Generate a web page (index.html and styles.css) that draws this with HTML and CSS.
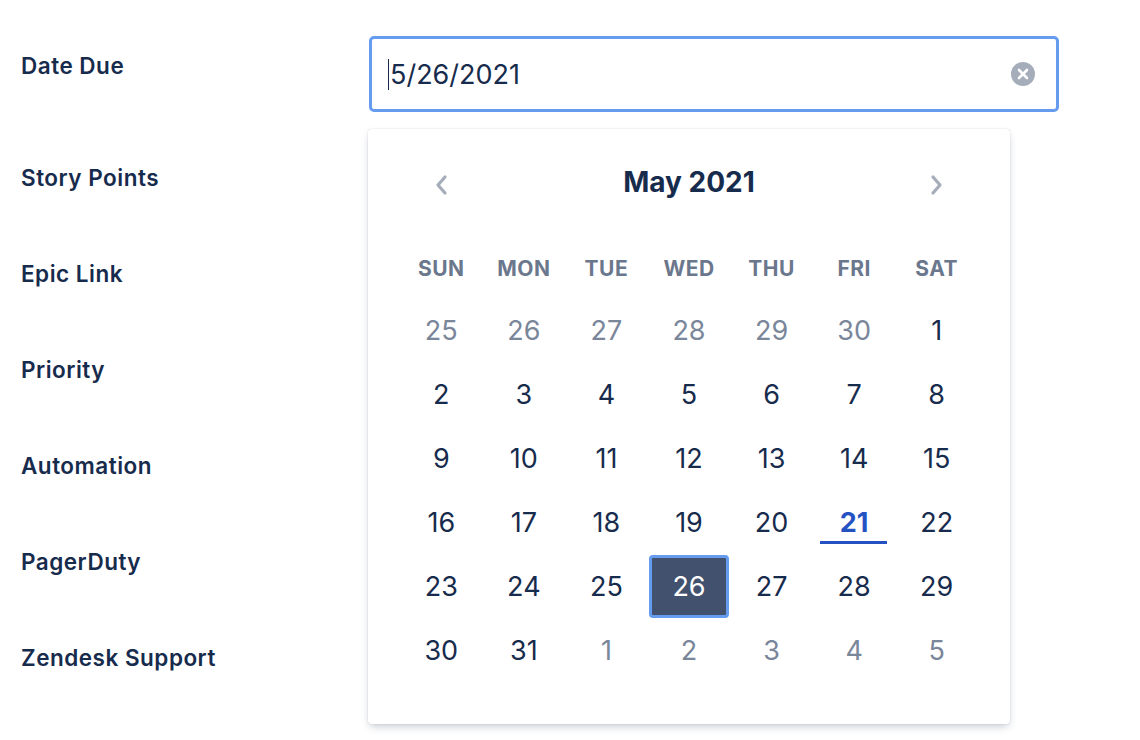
FILE: index.html
```html
<!DOCTYPE html>
<html lang="en">
<head>
<meta charset="utf-8">
<title>Date Due</title>
<link rel="stylesheet" href="styles.css">
</head>
<body>
<div class="form">
  <ul class="labels">
    <li class="label first">Date Due</li>
    <li class="label">Story Points</li>
    <li class="label">Epic Link</li>
    <li class="label">Priority</li>
    <li class="label">Automation</li>
    <li class="label">PagerDuty</li>
    <li class="label">Zendesk Support</li>
  </ul>
  <div class="field">
    <div class="input">
      <span class="caret"></span><span class="value">5/26/2021</span>
      <span class="clear">
        <svg width="24" height="24" viewBox="0 0 24 24"><circle cx="12" cy="12" r="12" fill="#a5adba"/><path d="M8 8l8 8M16 8l-8 8" stroke="#fff" stroke-width="2.6" stroke-linecap="round"/></svg>
      </span>
    </div>
    <div class="popup">
      <div class="cal-head">
        <span class="nav"><svg width="14" height="24" viewBox="0 0 14 24"><path d="M11 4L4 12l7 8" fill="none" stroke="#a5adba" stroke-width="3.2" stroke-linecap="round" stroke-linejoin="round"/></svg></span>
        <span class="month">May 2021</span>
        <span class="nav"><svg width="14" height="24" viewBox="0 0 14 24"><path d="M3 4l7 8-7 8" fill="none" stroke="#a5adba" stroke-width="3.2" stroke-linecap="round" stroke-linejoin="round"/></svg></span>
      </div>
      <div class="weekdays">
        <span>SUN</span><span>MON</span><span>TUE</span><span>WED</span><span>THU</span><span>FRI</span><span>SAT</span>
      </div>
      <div class="days">
        <span class="day out">25</span><span class="day out">26</span><span class="day out">27</span><span class="day out">28</span><span class="day out">29</span><span class="day out">30</span><span class="day">1</span>
        <span class="day">2</span><span class="day">3</span><span class="day">4</span><span class="day">5</span><span class="day">6</span><span class="day">7</span><span class="day">8</span>
        <span class="day">9</span><span class="day">10</span><span class="day">11</span><span class="day">12</span><span class="day">13</span><span class="day">14</span><span class="day">15</span>
        <span class="day">16</span><span class="day">17</span><span class="day">18</span><span class="day">19</span><span class="day">20</span><span class="day today">21</span><span class="day">22</span>
        <span class="day">23</span><span class="day">24</span><span class="day">25</span><span class="day selected">26</span><span class="day">27</span><span class="day">28</span><span class="day">29</span>
        <span class="day">30</span><span class="day">31</span><span class="day out">1</span><span class="day out">2</span><span class="day out">3</span><span class="day out">4</span><span class="day out">5</span>
      </div>
    </div>
  </div>
</div>
</body>
</html>
```

FILE: styles.css
```css
html, body {
  margin: 0;
  padding: 0;
  background: #fff;
}
body {
  font-family: Inter, "Noto Sans", "Liberation Sans", sans-serif;
  color: #172b4d;
  width: 1140px;
  height: 740px;
  overflow: hidden;
}
.form {
  display: flex;
  align-items: flex-start;
}
.labels {
  list-style: none;
  margin: 0;
  padding: 0 0 0 21px;
  width: 348px;
}
.label {
  height: 96px;
  line-height: 24px;
  font-size: 22.5px;
  font-weight: 600;
  letter-spacing: 0.5px;
  padding-top: 36px;
  box-sizing: border-box;
}
.label.first {
  height: 130px;
  padding-top: 54px;
}
.field {
  position: relative;
  padding-top: 36px;
}
.input {
  width: 690px;
  height: 76px;
  box-sizing: border-box;
  border: 3px solid #659cf0;
  border-radius: 5px;
  display: flex;
  align-items: center;
  padding: 0 21px 0 16px;
  font-size: 27px;
  color: #172b4d;
}
.caret {
  width: 1px;
  height: 31px;
  background: #172b4d;
  margin-right: 1px;
}
.value {
  flex: 1;
  letter-spacing: 0;
}
.clear {
  display: flex;
}
.popup {
  position: absolute;
  left: -1px;
  top: 129px;
  width: 642px;
  box-sizing: border-box;
  background: #fff;
  padding: 28px 32px 41px;
  border-radius: 3px;
  box-shadow: 0 4px 8px -2px rgba(9, 30, 66, 0.25), 0 0 1px rgba(9, 30, 66, 0.31);
}
.cal-head {
  height: 50px;
  display: flex;
  align-items: center;
  justify-content: space-between;
}
.nav {
  width: 82px;
  display: flex;
  justify-content: center;
  padding-top: 5px;
}
.month {
  font-size: 28px;
  font-weight: 700;
  letter-spacing: 0;
}
.weekdays {
  margin-top: 41px;
  display: grid;
  grid-template-columns: repeat(7, 1fr);
  height: 40px;
  align-items: center;
  text-align: center;
  font-size: 21px;
  font-weight: 700;
  color: #6b778c;
  letter-spacing: 0.5px;
}
.days {
  margin-top: 11px;
  display: grid;
  grid-template-columns: repeat(7, 1fr);
  grid-auto-rows: 64px;
}
.day {
  position: relative;
  margin: 0 1px 1px;
  display: flex;
  align-items: center;
  justify-content: center;
  font-size: 27px;
  color: #172b4d;
  border-radius: 4px;
}
.day.out {
  color: #7a869a;
}
.day.today {
  color: #2552c2;
  font-weight: 700;
}
.day.today::after {
  content: "";
  position: absolute;
  left: 6px;
  right: 7px;
  bottom: 10px;
  height: 3px;
  background: #2552c2;
}
.day.selected {
  background: #42526e;
  color: #fff;
  border: 3px solid #659cf0;
  box-sizing: border-box;
}
```
